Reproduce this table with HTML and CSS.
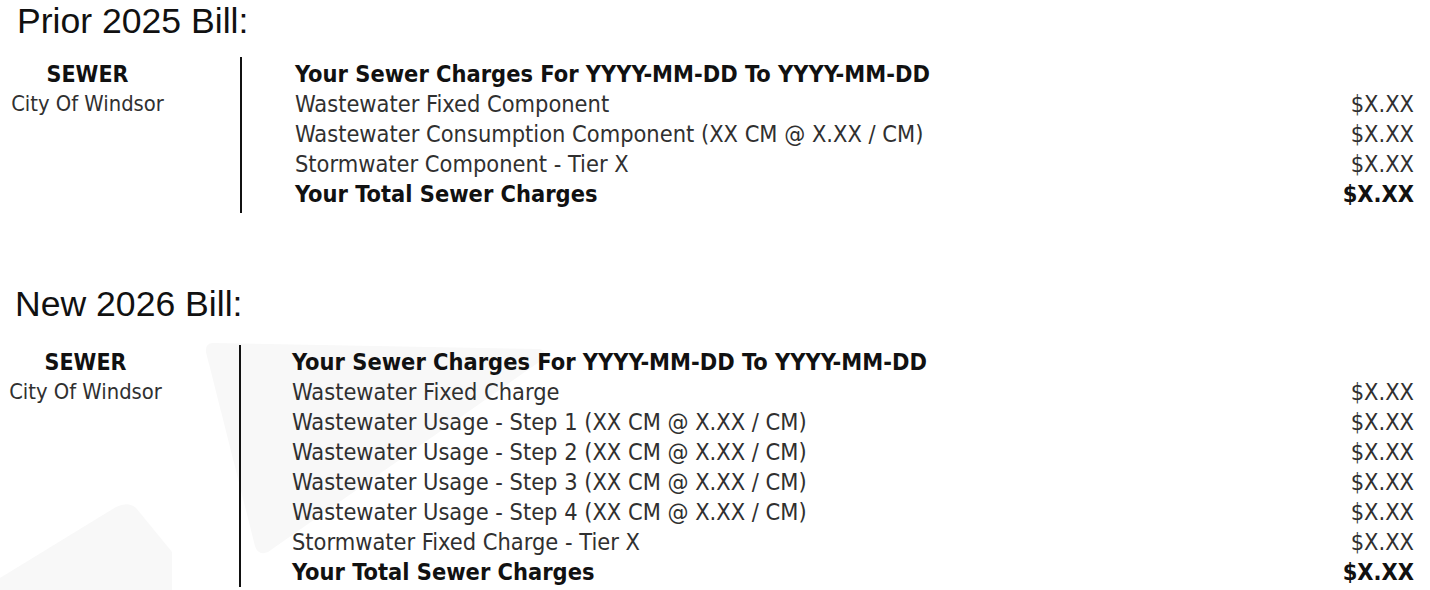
FILE: index.html
```html
<!DOCTYPE html>
<html lang="en">
<head>
<meta charset="utf-8">
<title>Sewer Bill Comparison</title>
<link rel="stylesheet" href="styles.css">
</head>
<body>
<svg class="watermark" width="1430" height="590" viewBox="0 0 1430 590" aria-hidden="true">
  <path d="M212 343 L540 349 Q548 352 542 360 L268 552 Q258 556 255 546 L206 352 Q205 344 212 343 Z" fill="#f8f8f8"/>
  <path d="M0 578 L116 507 Q128 501 136 508 L172 552 L172 590 L0 590 Z" fill="#f8f8f8"/>
</svg>

<section class="bill bill--prior">
  <h2 class="bill-title">Prior 2025 Bill:</h2>
  <div class="statement">
    <div class="provider">
      <div class="provider-name">SEWER</div>
      <div class="provider-city">City Of Windsor</div>
    </div>
    <div class="divider"></div>
    <div class="charges">
      <div class="row row--head"><span>Your Sewer Charges For YYYY-MM-DD To YYYY-MM-DD</span></div>
      <div class="row"><span>Wastewater Fixed Component</span><span class="amt">$X.XX</span></div>
      <div class="row"><span>Wastewater Consumption Component (XX CM @ X.XX / CM)</span><span class="amt">$X.XX</span></div>
      <div class="row"><span>Stormwater Component - Tier X</span><span class="amt">$X.XX</span></div>
      <div class="row row--total"><span>Your Total Sewer Charges</span><span class="amt">$X.XX</span></div>
    </div>
  </div>
</section>

<section class="bill bill--new">
  <h2 class="bill-title">New 2026 Bill:</h2>
  <div class="statement">
    <div class="provider">
      <div class="provider-name">SEWER</div>
      <div class="provider-city">City Of Windsor</div>
    </div>
    <div class="divider"></div>
    <div class="charges">
      <div class="row row--head"><span>Your Sewer Charges For YYYY-MM-DD To YYYY-MM-DD</span></div>
      <div class="row"><span>Wastewater Fixed Charge</span><span class="amt">$X.XX</span></div>
      <div class="row"><span>Wastewater Usage - Step 1 (XX CM @ X.XX / CM)</span><span class="amt">$X.XX</span></div>
      <div class="row"><span>Wastewater Usage - Step 2 (XX CM @ X.XX / CM)</span><span class="amt">$X.XX</span></div>
      <div class="row"><span>Wastewater Usage - Step 3 (XX CM @ X.XX / CM)</span><span class="amt">$X.XX</span></div>
      <div class="row"><span>Wastewater Usage - Step 4 (XX CM @ X.XX / CM)</span><span class="amt">$X.XX</span></div>
      <div class="row"><span>Stormwater Fixed Charge - Tier X</span><span class="amt">$X.XX</span></div>
      <div class="row row--total"><span>Your Total Sewer Charges</span><span class="amt">$X.XX</span></div>
    </div>
  </div>
</section>
</body>
</html>
```

FILE: styles.css
```css
html {
  margin: 0;
  padding: 0;
  background: #ffffff;
}

body {
  margin: 0;
  padding: 0;
  width: 1430px;
  height: 590px;
  overflow: hidden;
  position: relative;
  isolation: isolate;
  font-family: "DejaVu Sans Condensed", "DejaVu Sans", sans-serif;
  color: #303030;
}

.watermark {
  position: absolute;
  left: 0;
  top: 0;
  z-index: -1;
}

.bill-title {
  margin: 0;
  font-family: "Liberation Sans", Arial, sans-serif;
  font-weight: normal;
  font-size: 35.6px;
  line-height: 40px;
  color: #111;
}

.bill--prior .bill-title {
  padding: 1px 0 0 17px;
}

.bill--prior .statement {
  margin-top: 16px;
}

.bill--new {
  margin-top: 71px;
}

.bill--new .bill-title {
  padding-left: 15px;
}

.bill--new .statement {
  margin-top: 21px;
}

.bill--new .provider {
  margin-left: -2px;
}

.bill--new .divider {
  margin-left: 66px;
}

.bill--new .charges {
  padding-left: 51px;
  padding-bottom: 0;
}

.statement {
  display: flex;
  align-items: stretch;
  padding-right: 16px;
}

.provider {
  width: 175px;
  flex: none;
  text-align: center;
  padding-top: 2px;
}

.provider-name {
  font-weight: bold;
  font-size: 23px;
  line-height: 30px;
  color: #111;
}

.provider-city {
  font-size: 21.8px;
  line-height: 30px;
}

.divider {
  width: 2px;
  flex: none;
  background: #111;
  margin-left: 65px;
}

.charges {
  flex: 1;
  padding: 2px 0 4px 53px;
}

.row {
  display: flex;
  justify-content: space-between;
  height: 30px;
  line-height: 30px;
  font-size: 23.4px;
  white-space: nowrap;
}

.row--head,
.row--total {
  font-weight: bold;
  color: #111;
}

.amt {
  text-align: right;
}
```
